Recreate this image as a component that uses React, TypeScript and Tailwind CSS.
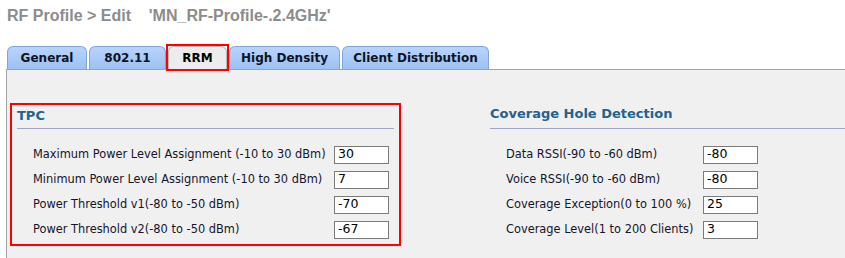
const tabs = [
  { label: "General", w: 80 },
  { label: "802.11", w: 77 },
  { label: "RRM", w: 59, active: true },
  { label: "High Density", w: 111 },
  { label: "Client Distribution", w: 147 },
];

const tpc = [
  { label: "Maximum Power Level Assignment (-10 to 30 dBm)", value: "30" },
  { label: "Minimum Power Level Assignment (-10 to 30 dBm)", value: "7" },
  { label: "Power Threshold v1(-80 to -50 dBm)", value: "-70" },
  { label: "Power Threshold v2(-80 to -50 dBm)", value: "-67" },
];

const coverage = [
  { label: "Data RSSI(-90 to -60 dBm)", value: "-80" },
  { label: "Voice RSSI(-90 to -60 dBm)", value: "-80" },
  { label: "Coverage Exception(0 to 100 %)", value: "25" },
  { label: "Coverage Level(1 to 200 Clients)", value: "3" },
];

function Field({ label, value, labelW }: { label: string; value: string; labelW: string }) {
  return (
    <div className="flex h-[25px] items-center">
      <div className={`${labelW} shrink-0 text-[11.4px] text-[#14142a] whitespace-nowrap`}>{label}</div>
      <div className="flex h-[18px] w-[55px] items-center border border-[#7a7a7a] bg-white px-[3px] text-[12.5px] text-black">
        {value}
      </div>
    </div>
  );
}

export default function App() {
  return (
    <div className="h-[258px] w-[845px] overflow-hidden bg-white font-['DejaVu_Sans',Verdana,sans-serif]">
      {/* Title */}
      <div className="h-[46px] pl-[7px] pt-[6px] font-['Liberation_Sans',Arial,sans-serif] text-[16px] font-bold leading-[20px] text-[#8c8c8c] whitespace-pre">
        {"RF Profile > Edit    'MN_RF-Profile-.2.4GHz'"}
      </div>

      {/* Tabs */}
      <div className="flex h-[23px] items-end gap-[2px] pl-[7px]">
        {tabs.map((t) =>
          t.active ? (
            <div key={t.label} className="relative h-[23px]">
              <div
                className="flex h-[23px] items-center justify-center rounded-t-[6px] border border-b-0 border-[#b8b8b8] bg-[#ececec] text-[12px] font-bold text-black"
                style={{ width: t.w }}
              >
                {t.label}
              </div>
              <div className="pointer-events-none absolute -left-[2px] -right-[2px] -top-[2px] -bottom-[2px] border-2 border-[#ff0000]" />
            </div>
          ) : (
            <div
              key={t.label}
              className="flex h-[23px] items-center justify-center rounded-t-[6px] border border-b-0 border-[#7ea6dc] bg-gradient-to-b from-[#b9d4fa] to-[#9cc0f4] text-[12px] font-bold text-[#0c1424]"
              style={{ width: t.w }}
            >
              {t.label}
            </div>
          )
        )}
      </div>

      {/* Panel */}
      <div className="ml-[6px] flex h-[189px] border-l border-t border-[#a3a3a3] bg-[#f0f0f0]">
        {/* TPC */}
        <div className="ml-[3px] mt-[33px] h-[143px] w-[391px] border-2 border-[#ff0000] px-[5px]">
          <div className="h-[24px] border-b border-[#9ea6c6] pt-[3px] text-[13px] font-bold leading-[16px] text-[#23628f]">
            TPC
          </div>
          <div className="mt-[13px] pl-[16px]">
            {tpc.map((r) => (
              <Field key={r.label} label={r.label} value={r.value} labelW="w-[301px]" />
            ))}
          </div>
        </div>

        {/* Coverage */}
        <div className="ml-[89px] mt-[35px] flex-1">
          <div className="h-[24px] border-b border-[#9ea6c6] pt-[1px] text-[13px] font-bold leading-[16px] text-[#23628f]">
            Coverage Hole Detection
          </div>
          <div className="mt-[13px] pl-[16px]">
            {coverage.map((r) => (
              <Field key={r.label} label={r.label} value={r.value} labelW="w-[197px]" />
            ))}
          </div>
        </div>
      </div>
    </div>
  );
}
